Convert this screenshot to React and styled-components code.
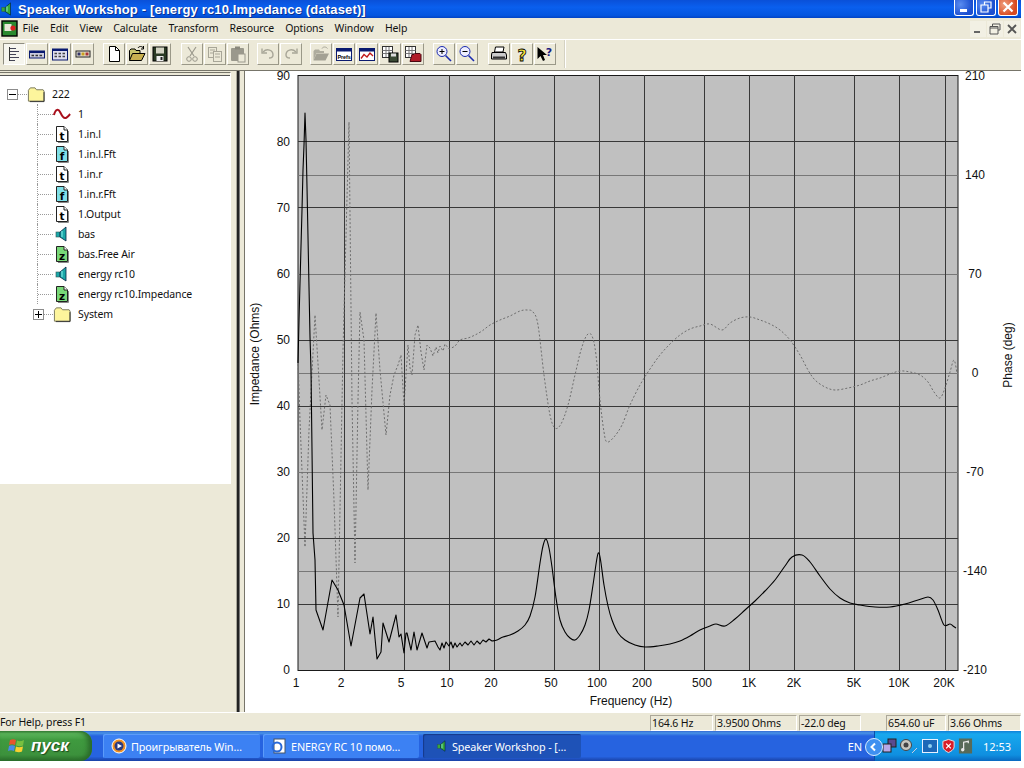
import React from "react";
import styled, { createGlobalStyle } from "styled-components";

const Global = createGlobalStyle`
  html, body { margin: 0; padding: 0; background: #fff; }
  body { font-family: "Noto Sans", "Liberation Sans", sans-serif; font-size: 10.5px; letter-spacing: -0.12px; color: #000; }
`;

const Screen = styled.div`
  width: 1021px; height: 761px; display: flex; flex-direction: column; background: #ece9d8; overflow: hidden;
`;
const TitleBar = styled.div`
  height: 18px; flex: none; display: flex; align-items: center; color: #fff;
  background: linear-gradient(180deg, #0a50d8 0%, #0a5fee 40%, #0456e0 85%, #0344c4 100%);
`;
const TitleText = styled.span`
  font-family: "Liberation Sans", sans-serif; font-weight: 700; font-size: 13px; margin-left: 4px; white-space: nowrap;
  text-shadow: 1px 1px 0 #0a2f90; letter-spacing: 0.15px; flex: 1;
`;
const CaptionButtons = styled.div`display: flex; gap: 2px; margin-right: 3px; height: 16px; margin-top: -3px;`;
const CaptionButton = styled.div`
  width: 20px; height: 16px; box-sizing: border-box; border: 1px solid #fff; border-top: none; border-radius: 0 0 3px 3px;
  background: ${p => p.$close ? "radial-gradient(circle at 30% 30%, #f0a080, #d84a20 70%)" : "radial-gradient(circle at 30% 30%, #5a8cf0, #1c4fd0 70%)"};
  display: flex; align-items: center; justify-content: center;
`;
const MenuBar = styled.div`
  height: 21px; flex: none; display: flex; align-items: center; background: #ece9d8; border-bottom: 1px solid #fff; box-sizing: content-box;
`;
const MenuIcon = styled.div`width: 17px; height: 17px; margin: 0 0 0 1px; flex: none;`;
const MenuItems = styled.div`display: flex; flex: 1; margin-left: -1px; padding-bottom: 2px;`;
const MenuItem = styled.span`padding: 0 5.6px; white-space: nowrap; color: #111;`;
const DocButtons = styled.div`display: flex; gap: 1px; margin-right: 1px;`;
const DocButton = styled.div`
  width: 16px; height: 16px; display: flex; align-items: center; justify-content: center; background: #f2f0e4;
`;
const ToolBar = styled.div`
  height: 28px; flex: none; display: flex; align-items: center; background: #ece9d8; padding: 0 0 2px 3px;
  border-bottom: 1px solid #77756a; box-sizing: content-box;
`;
const ToolGroup = styled.div`display: flex; margin-right: ${p => p.$gap}px; gap: 0;`;
const ToolEnd = styled.div`width: 1px; height: 28px; background: #d5d2c2; border-right: 1px solid #fff; margin-left: -1px;`;
const ToolButton = styled.div`
  width: 22px; height: 22px; margin-right: 1px; display: flex; align-items: center; justify-content: center;
  border: 1px solid; border-color: ${p => p.$pressed ? "#8f8d80 #fff #fff #8f8d80" : "#fff #9a9888 #9a9888 #fff"};
  background: ${p => p.$pressed ? "#f6f5ee" : "#ece9d8"}; box-sizing: border-box;
`;
const Main = styled.div`flex: 1; display: flex; min-height: 0;`;
const LeftColumn = styled.div`
  width: 245px; flex: none; display: flex; background: #ece9d8; border-right: 1px solid #77756a; box-sizing: border-box;
`;
const TreePane = styled.div`
  width: 231px; height: 412px; flex: none; box-sizing: border-box; background: #fff; margin-top: 1px;
  border-top: 1px solid #77756a; border-right: 1px solid #fff; box-shadow: inset 0 2px 0 #ece9d8, inset 0 3px 0 #555;
  padding-top: 11px; overflow: hidden;
`;
const Splitter = styled.div`
  width: 4px; margin-left: 5px; flex: none; background: linear-gradient(90deg, #a8a69a 0 1px, #222 1px 3px, #777 3px);
`;
const TreeRow = styled.div`display: flex; align-items: center; height: 20px; padding-left: ${p => p.$indent}px;`;
const Expander = styled.div`
  width: 11px; height: 11px; box-sizing: border-box; border: 1px solid #8c8c8c; background: #fff; flex: none;
  display: flex; align-items: center; justify-content: center;
`;
const Twig = styled.div`
  flex: none; height: 20px; width: ${p => p.$w}px; box-sizing: border-box; align-self: flex-start;
  border-left: 1px dotted #999;
  background: linear-gradient(90deg, #999 50%, transparent 50%) 0 10px / 2px 1px repeat-x;
`;
const TreeGap = styled.div`width: ${p => p.$w}px; height: 1px; flex: none; background: linear-gradient(90deg, #999 50%, transparent 50%) 0 0 / 2px 1px repeat-x;`;
const TreeIcon = styled.div`width: 18px; height: 18px; flex: none; display: flex; align-items: center; justify-content: center;`;
const TreeLabel = styled.span`margin-left: 7px; white-space: nowrap; color: #111;`;
const ChartPane = styled.div`flex: 1; background: #fff; min-width: 0;`;
const ChartSvg = styled.svg`display: block; width: 775px; height: 643px; margin-top: -2px;`;
const AxisText = styled.text`font-family: "Liberation Sans", Arial, sans-serif; font-size: 12px; fill: #111; letter-spacing: 0;`;
const StatusBar = styled.div`
  height: 19px; flex: none; display: flex; align-items: center; background: #ece9d8; border-top: 1px solid #fff; box-sizing: border-box;
`;
const StatusHelp = styled.span`flex: 1; color: #111;`;
const StatusPanes = styled.div`display: flex; margin-top: 2px;`;
const StatusPane = styled.div`
  width: ${p => p.$w}px; margin-right: ${p => p.$gap}px; height: 16px; box-sizing: border-box; line-height: 15px; padding-left: 1px;
  border: 1px solid; border-color: #aca899 #fff #fff #aca899; white-space: nowrap; color: #111;
`;
const TaskBar = styled.div`
  height: 30px; flex: none; display: flex; align-items: stretch; color: #fff;
  background: linear-gradient(180deg, #3168d5 0, #4993e6 2px, #2663e0 5px, #2663e0 85%, #1941a5 100%);
`;
const StartButton = styled.div`
  width: 92px; flex: none; display: flex; align-items: center; gap: 4px; padding-left: 7px; box-sizing: border-box; border-radius: 0 12px 12px 0;
  background: linear-gradient(180deg, #3c8a3c 0, #5cb85c 8%, #3f9a3f 30%, #3c913c 80%, #2c6f2c 100%);
  box-shadow: inset -4px 0 5px #2a6a2a;
`;
const StartText = styled.span`font-family: "Liberation Sans", sans-serif; font-weight: 700; font-style: italic; font-size: 17px; letter-spacing: 0; text-shadow: 1px 1px 1px #1c4a1c;`;
const TaskButtons = styled.div`display: flex; margin-left: 11px; flex: 1; align-items: center;`;
const TaskButton = styled.div`
  width: ${p => p.$w}px; margin-right: ${p => p.$gap}px; height: 24px; display: flex; align-items: center; gap: 4px; padding-left: ${p => p.$pad}px; box-sizing: border-box; border-radius: 2px;
  background: ${p => p.$active ? "#1e52b7" : "#3c81f3"}; font-size: 10.8px; white-space: nowrap; overflow: hidden;
  box-shadow: ${p => p.$active ? "inset 1px 1px 1px #16398a" : "inset 1px 1px 0 #5c9cfa"};
`;
const Lang = styled.span`align-self: center; margin-right: 12px; font-size: 11px;`;
const Tray = styled.div`
  width: 147px; flex: none; display: flex; align-items: center; gap: 2px; padding-left: 6px; box-sizing: border-box; position: relative;
  background: linear-gradient(180deg, #0f80d8 0, #18a8ee 10%, #0f8fe0 80%, #0a68c0 100%); border-left: 1px solid #0a4ea8;
`;
const TrayChevron = styled.div`
  position: absolute; left: -10px; top: 7px; width: 18px; height: 18px; border-radius: 50%; background: #3f90f0; border: 1px solid #d8ecff;
  box-sizing: border-box; display: flex; align-items: center; justify-content: center;
`;
const Clock = styled.span`font-size: 11px; margin-left: 8px; letter-spacing: 0;`;

const Speaker = ({ s = 16, c = "#1aa8a8" }) => (
  <svg width={s} height={s} viewBox="0 0 16 16">
    <rect x="2" y="6" width="4" height="5" fill={c} stroke="#355" strokeWidth=".6" />
    <path d="M6 6 L12 1 V15 L6 11 Z" fill={c} stroke="#024" strokeWidth=".8" />
    <path d="M8 5 V11" stroke="#8ee" strokeWidth="1" />
  </svg>
);
const Folder = ({ s = 19 }) => (
  <svg width={s} height={s - 2} viewBox="0 0 19 17">
    <path d="M1.5 4 L3.5 1.5 H8.5 L10 3.5 H17 L18 5 V15.5 H1.5 Z" fill="#fdf59c" stroke="#77755a" />
    <path d="M18 6 V16 H3" stroke="#333" fill="none" />
  </svg>
);
const DocLetter = ({ ch, fill }) => (
  <svg width="16" height="18" viewBox="0 0 16 18">
    <path d="M2.5 1.5 H10 L13.5 5 V16.5 H2.5 Z" fill={fill} stroke="#222" />
    <path d="M10 1.5 V5 H13.5" fill="#fff" stroke="#222" />
    <path d="M14.5 6 V17.5 H4" stroke="#888" fill="none" />
    <text x="8" y="14.5" textAnchor="middle" fontFamily="DejaVu Sans" fontWeight="700" fontSize="10.5" fill="#000">{ch}</text>
  </svg>
);
const Wave = () => (
  <svg width="20" height="14" viewBox="0 0 20 14">
    <path d="M1 8 C3 1 6 1 8 5 S12 13 15 11 S18 8 19 7" fill="none" stroke="#a8101c" strokeWidth="2.2" />
  </svg>
);

const line = (d, c = "#000", w = 1) => <path d={d} stroke={c} strokeWidth={w} fill="none" />;
const I = ({ children }) => <svg width="18" height="18" viewBox="0 0 18 18">{children}</svg>;
const winIcon = (inner) => (
  <I>
    <rect x="1.5" y="3.5" width="15" height="12" fill="#fff" stroke="#0a1a70" />
    <rect x="1.5" y="3.5" width="15" height="3" fill="#0a1a70" />
    {inner}
  </I>
);

const Icons = {
  tree: <I>{line("M4.5 2 V16", "#333")}{line("M5 3.5 H11 M5 6.5 H14 M5 9.5 H11 M5 12.5 H14 M5 15.5 H10", "#445")}</I>,
  bar1: <I><rect x="1.5" y="6" width="15" height="7" fill="#ccd" stroke="#0a1a70" /><rect x="1.5" y="6" width="15" height="2" fill="#0a1a70" />{line("M3.5 10.5 H6 M7.5 10.5 H10 M11.5 10.5 H14", "#333", 1.5)}</I>,
  bar2: <I><rect x="1.5" y="4" width="15" height="11" fill="#dde" stroke="#0a1a70" /><rect x="1.5" y="4" width="15" height="2" fill="#0a1a70" />{line("M3.5 8.5 H6 M7.5 8.5 H10 M11.5 8.5 H14 M3.5 11.5 H6 M7.5 11.5 H10 M11.5 11.5 H14", "#444", 1.4)}</I>,
  bar3: <I><rect x="2" y="6" width="14" height="6" fill="#e8e4d4" stroke="#222" /><rect x="3.5" y="7.5" width="3" height="3" fill="#336" /><rect x="7.5" y="7.5" width="3" height="3" fill="#c8a020" /><rect x="11.5" y="7.5" width="3" height="3" fill="#a33" /></I>,
  new: <I><path d="M4.5 1.5 H10.5 L14.5 5.5 V16.5 H4.5 Z" fill="#fff" stroke="#000" />{line("M10.5 1.5 V5.5 H14.5")}</I>,
  open: <I><path d="M1.5 15.5 V5.5 L3 4 H7 L8 5.5 H12 V8" fill="#c8c46c" stroke="#000" /><path d="M1.5 15.5 L4.5 8.5 H17 L13.5 15.5 Z" fill="#c8b050" stroke="#000" />{line("M10 3 C11 1 14 1 15.5 3 M15.5 1 V4 H13", "#000")}</I>,
  save: <I><rect x="2" y="2" width="14" height="14" fill="#2a3a24" stroke="#000" /><rect x="5" y="2.5" width="8" height="6" fill="#d4d4c4" /><rect x="5.5" y="11" width="7" height="5" fill="#eee" /><rect x="9.5" y="12" width="2" height="3" fill="#222" /></I>,
  cut: <I>{line("M5 2 L11 11 M13 2 L7 11", "#9a988c", 1.2)}<circle cx="6" cy="14" r="2.3" fill="none" stroke="#9a988c" /><circle cx="12" cy="14" r="2.3" fill="none" stroke="#9a988c" /></I>,
  copy: <I><rect x="2.5" y="2.5" width="8" height="10" fill="#ece9d8" stroke="#a8a698" /><rect x="7.5" y="6.5" width="8" height="10" fill="#ece9d8" stroke="#a8a698" />{line("M4 5 H9 M4 8 H7 M9 9 H14 M9 12 H14", "#a8a698")}</I>,
  paste: <I><rect x="2" y="3" width="13" height="13" rx="1" fill="#9a988c" /><rect x="6" y="1.5" width="5" height="3" fill="#8a887c" /><rect x="9" y="9" width="7" height="8" fill="#ece9d8" stroke="#9a988c" /></I>,
  undo: <I>{line("M4 7 C8 3 14 5 14 10 C14 12 12 13 10 13", "#a8a698", 1.4)}{line("M3 3.5 V8 H8", "#a8a698", 1.4)}</I>,
  redo: <I>{line("M14 7 C10 3 4 5 4 10 C4 12 6 13 8 13", "#a8a698", 1.4)}{line("M15 3.5 V8 H10", "#a8a698", 1.4)}</I>,
  openOff: <I><path d="M1.5 15.5 V6 L3 4.5 H7 L8 6 H12 V8 H4.5 Z" fill="#aeac9e" /><path d="M1.5 15.5 L4.5 8.5 H17 L13.5 15.5 Z" fill="#a3a194" />{line("M10 3.5 C11 1.5 14 1.5 15.5 3.5", "#a8a698")}</I>,
  prefs: winIcon(<text x="9" y="13.5" textAnchor="middle" fontFamily="Liberation Sans" fontWeight="700" fontSize="5.5" fill="#000">Prefs</text>),
  chart: winIcon(line("M3 13.5 L6 9.5 L9 12 L12 8 L15 11", "#c01818", 1.3)),
  saveAll: <I><rect x="1.5" y="1.5" width="10" height="11" fill="#fff" stroke="#333" />{line("M1.5 5.5 H11.5 M1.5 8.5 H11.5 M5 2 V12 M8 2 V12", "#777")}<rect x="8" y="8" width="9" height="9" fill="#3a4a34" stroke="#000" /><rect x="10" y="8.5" width="5" height="3" fill="#ddd" /></I>,
  openAll: <I><rect x="1.5" y="1.5" width="10" height="11" fill="#fff" stroke="#333" />{line("M1.5 5.5 H11.5 M1.5 8.5 H11.5 M5 2 V12 M8 2 V12", "#777")}<path d="M6 16.5 L8 9.5 H10 L11 8.5 H16 L17 9.5 V16.5 Z" fill="#b01c28" stroke="#4a0810" /></I>,
  zoomIn: <I><circle cx="7" cy="6.5" r="5" fill="#eef" stroke="#1a2ab0" />{line("M4.5 6.5 H9.5 M7 4 V9", "#000")}{line("M10.5 10.5 L16 16", "#1a2ab0", 1.6)}</I>,
  zoomOut: <I><circle cx="7" cy="6.5" r="5" fill="#eef" stroke="#1a2ab0" />{line("M4.5 6.5 H9.5", "#000")}{line("M10.5 10.5 L16 16", "#1a2ab0", 1.6)}</I>,
  print: <I><path d="M5.5 2 H14 L13 7 H4.5 Z" fill="#fff" stroke="#000" /><path d="M2 7.5 H15.5 L16.5 10 V14 H1.5 V10 Z" fill="#ccc" stroke="#000" /><rect x="3" y="11.5" width="12" height="2" fill="#333" /></I>,
  help: <I><text x="9" y="15.5" textAnchor="middle" fontFamily="DejaVu Sans" fontWeight="700" fontSize="16" fill="#f8e838" stroke="#000" strokeWidth=".8">?</text></I>,
  whats: <I><path d="M1.5 2 L1.5 14 L4.5 11 L7 16 L9 15 L7 10 L11 10 Z" fill="#000" /><text x="13" y="10.5" textAnchor="middle" fontFamily="DejaVu Sans" fontWeight="700" fontSize="11" fill="#1a1a80">?</text></I>,
};

const groups = [
  { gap: 8, items: [["tree", true], ["bar1"], ["bar2"], ["bar3"]] },
  { gap: 9, items: [["new"], ["open"], ["save"]] },
  { gap: 7, items: [["cut"], ["copy"], ["paste"]] },
  { gap: 7, items: [["undo"], ["redo"]] },
  { gap: 8, items: [["openOff"], ["prefs"], ["chart"], ["saveAll"], ["openAll"]] },
  { gap: 9, items: [["zoomIn"], ["zoomOut"]] },
  { gap: 8, items: [["print"], ["help"], ["whats"]] },
];

const menus = ["File", "Edit", "View", "Calculate", "Transform", "Resource", "Options", "Window", "Help"];

const treeItems = [
  { label: "1", icon: <Wave /> },
  { label: "1.in.l", icon: <DocLetter ch="t" fill="#fff" /> },
  { label: "1.in.l.Fft", icon: <DocLetter ch="f" fill="#7fe0e8" /> },
  { label: "1.in.r", icon: <DocLetter ch="t" fill="#fff" /> },
  { label: "1.in.r.Fft", icon: <DocLetter ch="f" fill="#7fe0e8" /> },
  { label: "1.Output", icon: <DocLetter ch="t" fill="#fff" /> },
  { label: "bas", icon: <Speaker /> },
  { label: "bas.Free Air", icon: <DocLetter ch="z" fill="#78d878" /> },
  { label: "energy rc10", icon: <Speaker /> },
  { label: "energy rc10.Impedance", icon: <DocLetter ch="z" fill="#78d878" /> },
];

const hDark = [141, 207, 340, 406, 538, 604];
const hMid = [175, 274, 373, 472, 571];
const vLines = [344, 404, 449, 494, 554, 599, 644, 704, 749, 794, 854, 899, 945];
const leftLabels = [[90, 76], [80, 142], [70, 208], [60, 274], [50, 340], [40, 406], [30, 472], [20, 538], [10, 604], [0, 670]];
const rightLabels = [["210", 76], ["140", 175], ["70", 274], ["0", 373], ["-70", 472], ["-140", 571], ["-210", 670]];
const xLabels = [["1", 296], ["2", 341], ["5", 401], ["10", 447], ["20", 491], ["50", 551], ["100", 597], ["200", 642], ["500", 702], ["1K", 749], ["2K", 794], ["5K", 854], ["10K", 899], ["20K", 944]];

// Catmull-Rom smoothing of the sweeps that are smooth in the measured curves.
const smooth = (pts) => {
  let d = "";
  for (let i = 0; i < pts.length - 1; i++) {
    const p0 = pts[Math.max(i - 1, 0)], p1 = pts[i], p2 = pts[i + 1], p3 = pts[Math.min(i + 2, pts.length - 1)];
    const c1 = [p1[0] + (p2[0] - p0[0]) / 6, p1[1] + (p2[1] - p0[1]) / 6];
    const c2 = [p2[0] - (p3[0] - p1[0]) / 6, p2[1] - (p3[1] - p1[1]) / 6];
    d += ` C${c1[0]} ${c1[1]} ${c2[0]} ${c2[1]} ${p2[0]} ${p2[1]}`;
  }
  return d;
};

const impedanceHead = "M298 363 L299 320 L300 283 L302 210 L303 170 L304 145 L305 113 L306 140 L307 187 L308 237 L309 287 L310 337 L311 370 L312 450 L313 533 L315 560 L316 610 L323 630 L332 580 L338 590 L344 605 L351 646 L360 598 L364 594 L370 634 L373 617 L377 659 L381 652 L383 623 L389 642 L396 615 L399 637 L401 634 L404 653 L406 633 L407 633 L411 650 L414 632 L417 650 L422 633 L427 648 L429 642 L435 641 L438 647 L440 650 L442 643 L444 648 L446 642 L449 646 L451 642 L453 648 L455 643 L457 647 L460 643 L462 646 L465 642 L468 645 L471 641 L474 645 L477 641 L480 644 L483 640 L486 642 L489 639 L492 641";
const impedanceTail = [[492, 641], [497, 640], [503, 637], [510, 635], [518, 631], [525, 625], [530, 616], [535, 597], [540, 563], [543, 546], [546, 539], [549, 548], [552, 567], [556, 598], [560, 620], [565, 632], [570, 638], [575, 640], [580, 635], [585, 625], [589, 610], [593, 585], [597, 558], [599, 553], [601, 563], [604, 585], [608, 606], [612, 620], [618, 633], [625, 640], [635, 645], [645, 647], [658, 646], [670, 644], [680, 641], [690, 636], [700, 630], [710, 626], [716, 624], [725, 626], [735, 619], [745, 610], [755, 601], [765, 591], [775, 580], [785, 566], [792, 557], [802, 555], [810, 562], [820, 576], [830, 589], [840, 598], [850, 603], [860, 605], [875, 607], [890, 607], [905, 604], [918, 600], [928, 597], [933, 600], [938, 610], [944, 625], [950, 624], [953, 626], [956, 628]];

const phaseHead = "M298 360 L300 420 L305 547 L309 430 L315 315 L319 380 L322 430 L326 395 L330 405 L334 500 L338 617 L343 350 L349 122 L352 400 L355 563 L358 400 L360 312 L364 340 L368 490 L372 390 L376 313 L380 370 L386 435 L390 395 L394 375 L398 365 L401 355 L404 405 L408 345 L410 368 L412 375 L415 335 L418 325 L421 352 L424 370 L427 345 L430 348 L433 356 L436 347 L438 353 L440 346 L443 351 L445 344 L449 349";
const phaseTail = [[449, 349], [455, 346], [460, 340], [468, 338], [475, 335], [482, 331], [490, 325], [500, 320], [510, 316], [520, 311], [527, 310], [533, 312], [538, 325], [544, 375], [550, 415], [555, 428], [561, 424], [568, 405], [575, 375], [581, 350], [587, 335], [592, 336], [596, 355], [600, 400], [604, 432], [607, 442], [614, 437], [622, 425], [630, 405], [640, 385], [650, 369], [660, 355], [670, 344], [680, 335], [690, 329], [700, 326], [710, 324], [722, 330], [730, 323], [740, 318], [750, 317], [760, 320], [770, 324], [780, 330], [790, 340], [800, 355], [808, 370], [815, 380], [825, 387], [835, 390], [848, 388], [860, 385], [870, 381], [880, 378], [890, 374], [900, 371], [910, 372], [920, 375], [928, 382], [934, 392], [940, 398], [945, 388], [950, 372], [954, 360], [957, 373]];

function Chart() {
  return (
    <ChartSvg viewBox="245 69 775 643">
      <rect x="298" y="75.5" width="660" height="595" fill="#c0c0c0" stroke="#1a1a1a" />
      {hMid.map(y => <line key={y} x1="298" x2="958" y1={y + 0.5} y2={y + 0.5} stroke="#777" />)}
      {hDark.map(y => <line key={y} x1="298" x2="958" y1={y + 0.5} y2={y + 0.5} stroke="#383838" />)}
      {vLines.map(x => <line key={x} x1={x + 0.5} x2={x + 0.5} y1="75" y2="670" stroke="#383838" />)}
      <path d={phaseHead + smooth(phaseTail)} fill="none" stroke="#6e6e6e" strokeWidth="1" strokeDasharray="2 2" />
      <path d={impedanceHead + smooth(impedanceTail)} fill="none" stroke="#000" strokeWidth="1.1" strokeLinejoin="round" />
      {leftLabels.map(([t, y]) => <AxisText key={t} x="290" y={y + 4} textAnchor="end">{t}</AxisText>)}
      {rightLabels.map(([t, y]) => <AxisText key={t} x="975" y={y + 4} textAnchor="middle">{t}</AxisText>)}
      {xLabels.map(([t, x]) => <AxisText key={t} x={x} y="687" textAnchor="middle">{t}</AxisText>)}
      <AxisText x="631" y="705" textAnchor="middle">Frequency (Hz)</AxisText>
      <AxisText transform="translate(259 354) rotate(-90)" textAnchor="middle">Impedance (Ohms)</AxisText>
      <AxisText transform="translate(1012 355) rotate(-90)" textAnchor="middle">Phase (deg)</AxisText>
    </ChartSvg>
  );
}

const TrayIcons = () => (
  <>
    <svg width="16" height="16" viewBox="0 0 16 16"><rect x="7" y="1" width="8" height="8" fill="#5a4a90" stroke="#222" /><rect x="2" y="6" width="8" height="8" fill="#b8a8e8" stroke="#222" /></svg>
    <svg width="20" height="16" viewBox="0 0 20 16"><circle cx="7" cy="7" r="5.5" fill="#c8c8c0" stroke="#444" /><circle cx="7" cy="7" r="2.5" fill="#444" /><path d="M13 15 L18 10" stroke="#ccd" /></svg>
    <svg width="18" height="16" viewBox="0 0 18 16"><rect x="1.5" y="1.5" width="15" height="13" fill="#1c68b8" stroke="#e8f0ff" /><circle cx="9" cy="8" r="2" fill="#8fd0f0" /></svg>
    <svg width="15" height="16" viewBox="0 0 16 16"><path d="M8 1 L14 3 V9 C14 12 10 14 8 15 C6 14 2 12 2 9 V3 Z" fill="#d81c28" stroke="#e8e8e8" /><path d="M5.5 5.5 L10.5 10.5 M10.5 5.5 L5.5 10.5" stroke="#fff" strokeWidth="1.4" /></svg>
    <svg width="15" height="18" viewBox="0 0 16 18"><rect x="1" y="1" width="14" height="16" fill="#586a58" /><path d="M6 13 V5 L11 4 V6" stroke="#e8e8e8" strokeWidth="1.3" fill="none" /><circle cx="5" cy="13" r="1.8" fill="#e8e8e8" /></svg>
  </>
);

export default function App() {
  return (
    <Screen>
      <Global />
      <TitleBar>
        <Speaker s={14} c="#38a838" />
        <TitleText>Speaker Workshop - [energy rc10.Impedance (dataset)]</TitleText>
        <CaptionButtons>
          <CaptionButton><svg width="12" height="12" viewBox="0 0 12 12"><rect x="2" y="8" width="7" height="3" fill="#fff" /></svg></CaptionButton>
          <CaptionButton><svg width="12" height="12" viewBox="0 0 12 12"><path d="M4.5 3.5 V1 H11 V7 H8.5 M1 4 H8 V11 H1 Z" fill="none" stroke="#fff" strokeWidth="1.2" /></svg></CaptionButton>
          <CaptionButton $close><svg width="12" height="12" viewBox="0 0 12 12"><path d="M1.5 1.5 L10.5 10.5 M10.5 1.5 L1.5 10.5" stroke="#fff" strokeWidth="2.2" /></svg></CaptionButton>
        </CaptionButtons>
      </TitleBar>
      <MenuBar>
        <MenuIcon>
          <svg width="17" height="17" viewBox="0 0 17 17"><rect x="1" y="1" width="15" height="15" fill="#2a8a30" stroke="#000" strokeWidth="1.4" /><rect x="3.5" y="4" width="7" height="7" fill="#e8e8d8" /><circle cx="12" cy="8" r="2.6" fill="#d82020" /></svg>
        </MenuIcon>
        <MenuItems>
          {menus.map(m => <MenuItem key={m}>{m}</MenuItem>)}
        </MenuItems>
        <DocButtons>
          <DocButton><svg width="10" height="10" viewBox="0 0 10 10"><rect x="1" y="7" width="6" height="2" fill="#666" /></svg></DocButton>
          <DocButton><svg width="12" height="12" viewBox="0 0 12 12"><path d="M3.5 3 V1 H11 V7 H9 M1 3.5 H9 V11 H1 Z M1 5 H9" fill="none" stroke="#555" /></svg></DocButton>
          <DocButton><svg width="10" height="10" viewBox="0 0 10 10"><path d="M1 1 L9 9 M9 1 L1 9" stroke="#555" strokeWidth="1.8" /></svg></DocButton>
        </DocButtons>
      </MenuBar>
      <ToolBar>
        {groups.map((g, i) => (
          <ToolGroup key={i} $gap={g.gap}>
            {g.items.map(([name, pressed]) => (
              <ToolButton key={name} $pressed={pressed}>{Icons[name]}</ToolButton>
            ))}
          </ToolGroup>
        ))}
        <ToolEnd />
      </ToolBar>
      <Main>
        <LeftColumn>
          <TreePane>
            <TreeRow $indent={7}>
              <Expander><svg width="7" height="7" viewBox="0 0 7 7"><path d="M0 3.5 H7" stroke="#000" /></svg></Expander>
              <TreeGap $w={9} />
              <TreeIcon><Folder /></TreeIcon>
              <TreeLabel>222</TreeLabel>
            </TreeRow>
            {treeItems.map(it => (
              <TreeRow key={it.label} $indent={37}>
                <Twig $w={16} />
                <TreeIcon>{it.icon}</TreeIcon>
                <TreeLabel>{it.label}</TreeLabel>
              </TreeRow>
            ))}
            <TreeRow $indent={33}>
              <Expander><svg width="7" height="7" viewBox="0 0 7 7"><path d="M0 3.5 H7 M3.5 0 V7" stroke="#000" /></svg></Expander>
              <TreeGap $w={9} />
              <TreeIcon><Folder /></TreeIcon>
              <TreeLabel>System</TreeLabel>
            </TreeRow>
          </TreePane>
          <Splitter />
        </LeftColumn>
        <ChartPane><Chart /></ChartPane>
      </Main>
      <StatusBar>
        <StatusHelp>For Help, press F1</StatusHelp>
        <StatusPanes>
          <StatusPane $w={63} $gap={2}>164.6 Hz</StatusPane>
          <StatusPane $w={82} $gap={2}>3.9500 Ohms</StatusPane>
          <StatusPane $w={62} $gap={25}>-22.0 deg</StatusPane>
          <StatusPane $w={60} $gap={2}>654.60 uF</StatusPane>
          <StatusPane $w={73} $gap={0}>3.66 Ohms</StatusPane>
        </StatusPanes>
      </StatusBar>
      <TaskBar>
        <StartButton>
          <svg width="20" height="20" viewBox="0 0 20 20">
            <path d="M3 4 C5 3 7 3 9 4 L8 9 C6 8 4 8 2 9 Z" fill="#e8542c" />
            <path d="M10 4.5 C12 5.5 14 5.5 17 4 L16 9.5 C14 10.5 12 10.5 9 9.5 Z" fill="#78c040" />
            <path d="M2 10 C4 9 6 9 8 10 L7 15 C5 14 3 14 1 15 Z" fill="#4a8ae8" />
            <path d="M9 10.5 C11 11.5 13 11.5 16 10.5 L15 15.5 C13 16.5 11 16.5 8 15.5 Z" fill="#f8d030" />
          </svg>
          <StartText>пуск</StartText>
        </StartButton>
        <TaskButtons>
          <TaskButton $w={157} $gap={3} $pad={8}>
            <svg width="16" height="16" viewBox="0 0 16 16"><circle cx="8" cy="8" r="7" fill="#f09020" stroke="#fff" /><circle cx="8" cy="8" r="4.5" fill="#2a3a80" /><path d="M6.5 5.5 L11 8 L6.5 10.5 Z" fill="#fff" /></svg>
            Проигрыватель Win…
          </TaskButton>
          <TaskButton $w={156} $gap={4} $pad={8}>
            <svg width="16" height="16" viewBox="0 0 16 16"><rect x="3" y="1" width="11" height="14" fill="#fff" stroke="#456" /><circle cx="6" cy="9" r="4.5" fill="none" stroke="#2868d8" strokeWidth="2" /></svg>
            ENERGY RC 10 помо…
          </TaskButton>
          <TaskButton $w={158} $gap={0} $pad={13} $active>
            <Speaker s={12} c="#38a838" />
            Speaker Workshop - […
          </TaskButton>
        </TaskButtons>
        <Lang>EN</Lang>
        <Tray>
          <TrayChevron><svg width="10" height="10" viewBox="0 0 10 10"><path d="M6 1.5 L2.5 5 L6 8.5" stroke="#fff" strokeWidth="2" fill="none" /></svg></TrayChevron>
          <TrayIcons />
          <Clock>12:53</Clock>
        </Tray>
      </TaskBar>
    </Screen>
  );
}
